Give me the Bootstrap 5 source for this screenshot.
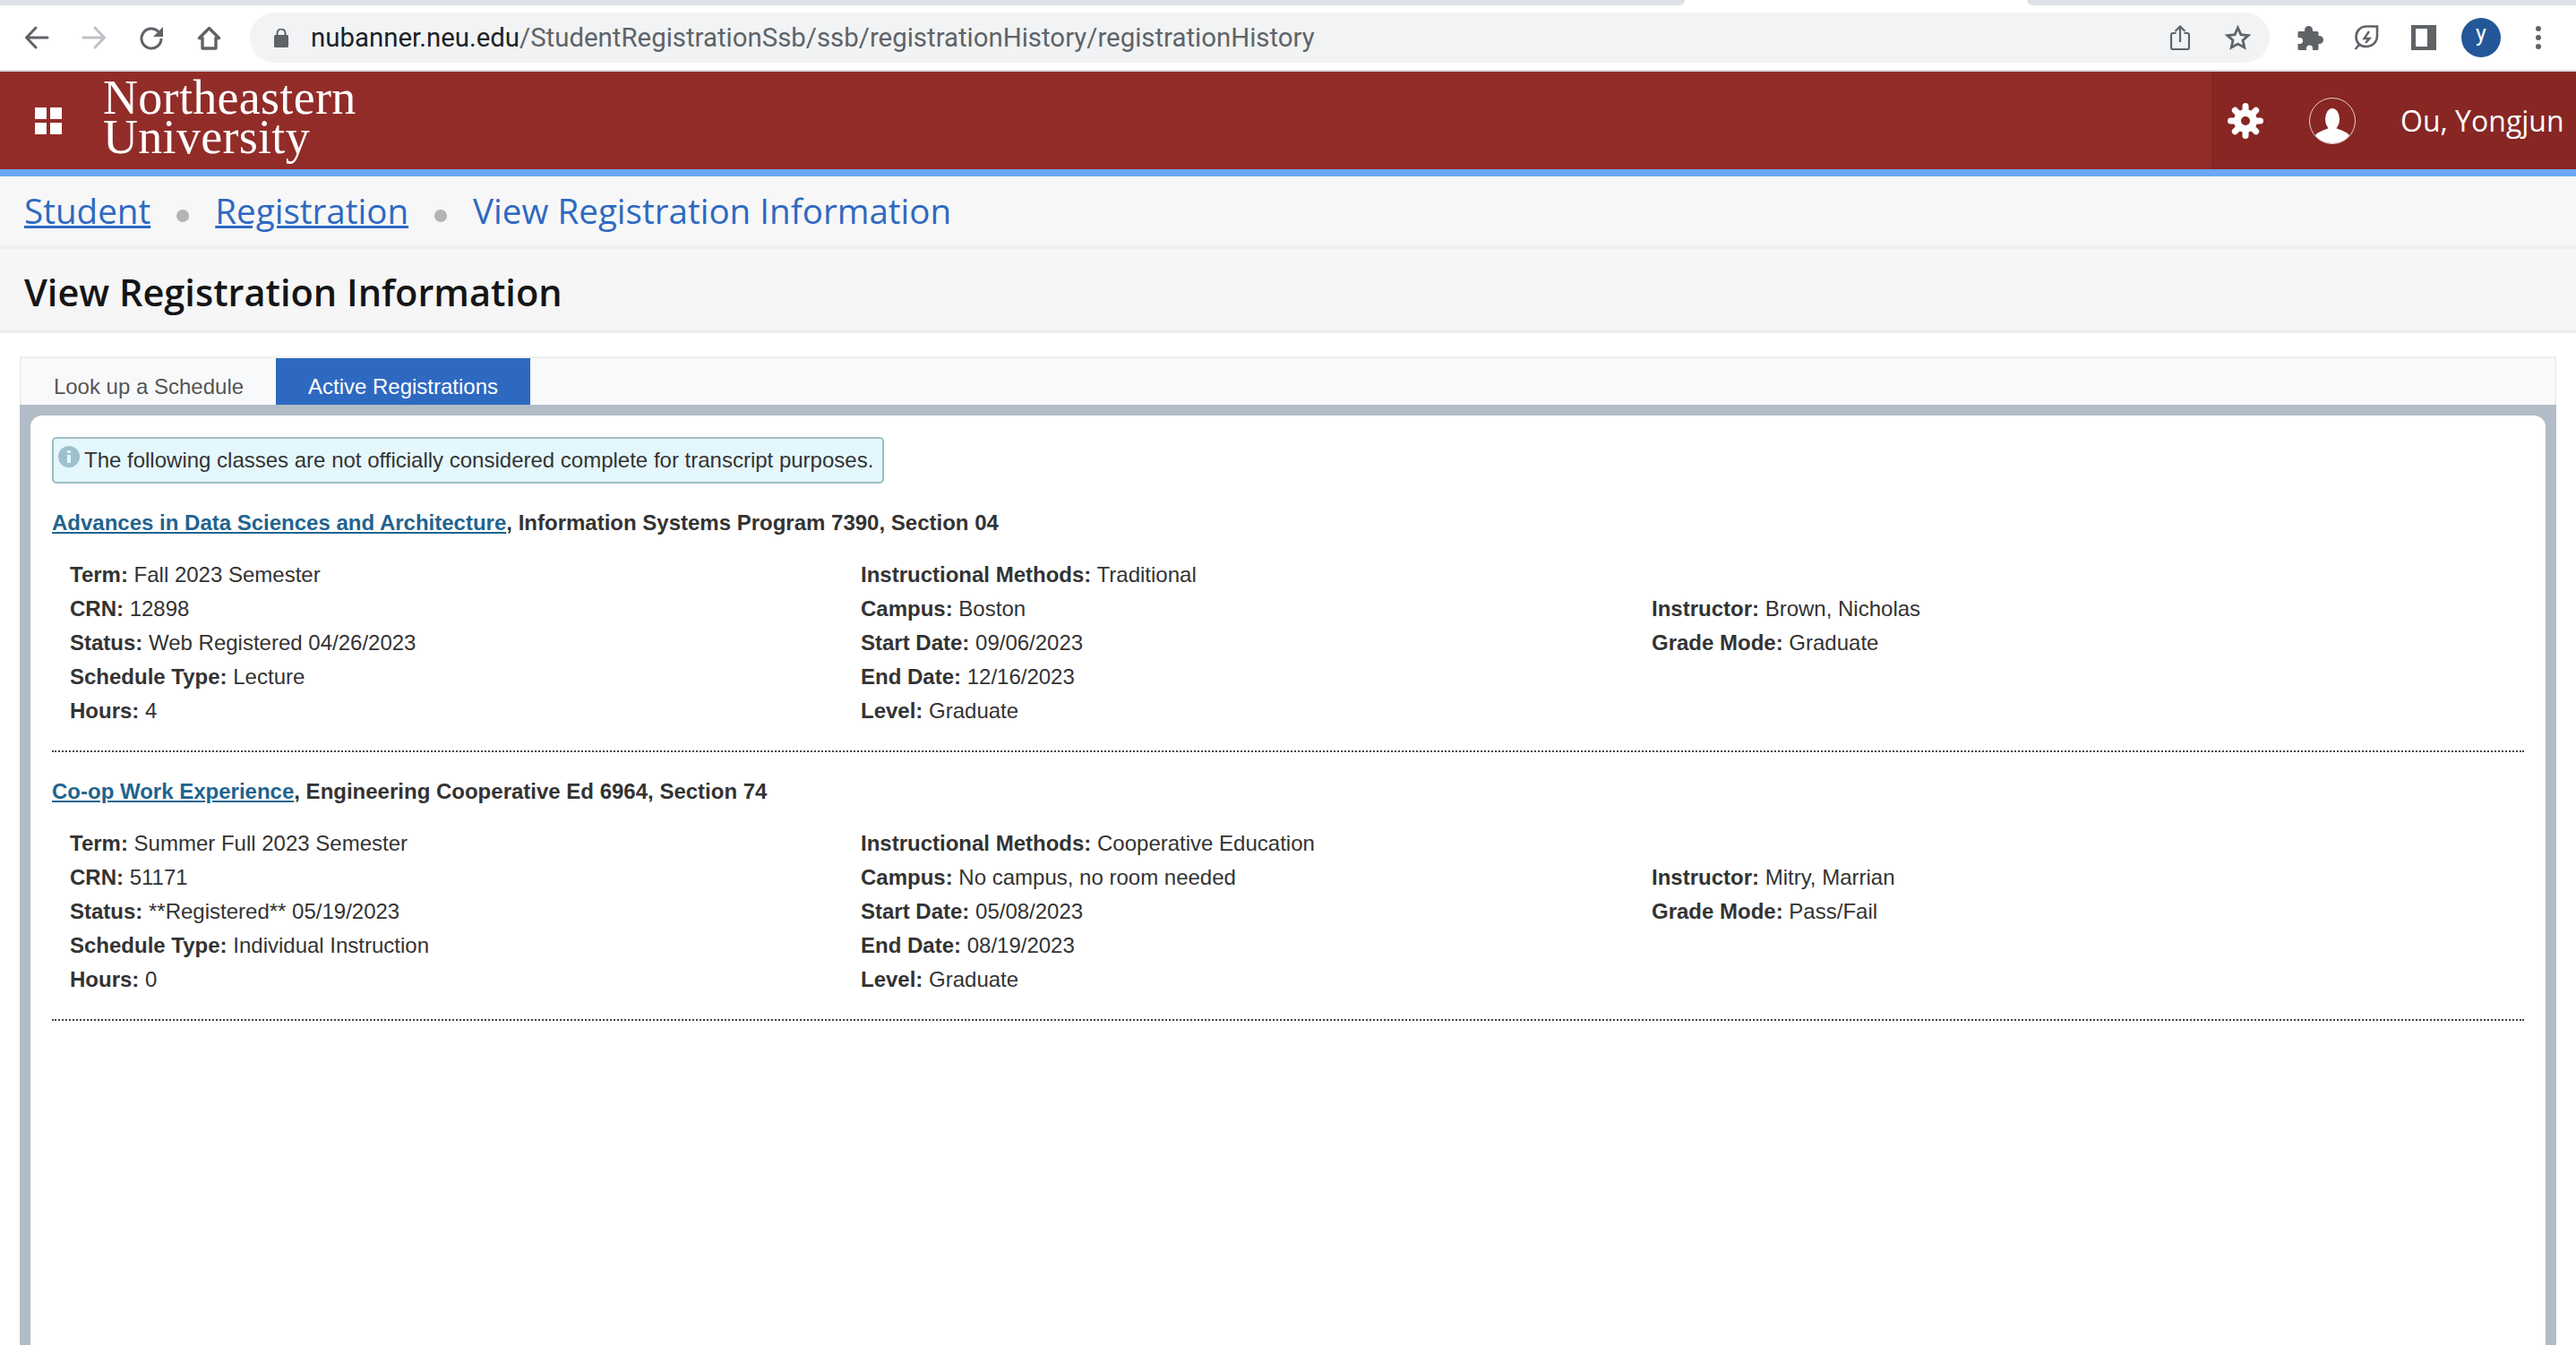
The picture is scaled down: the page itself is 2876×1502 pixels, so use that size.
<!DOCTYPE html>
<html lang="en">
<head>
    <meta charset="UTF-8">
    <meta name="viewport" content="width=device-width, initial-scale=1.0">
    <link href="https://cdn.jsdelivr.net/npm/bootstrap@5.3.2/dist/css/bootstrap.min.css" rel="stylesheet">
    <title>View Registration Information</title>
    <style>
        html, body { height: 100%; }
        body { background: #fff; overflow: hidden; font-family: "Liberation Sans", Arial, sans-serif; color: #333; }
        .tab-strip { height: 6px; background: #fff; display: flex; justify-content: space-between; }
        .tab-strip span { background: #dee1e6; }
        .tab-strip .left-part { width: 1881px; border-bottom-right-radius: 6px; }
        .tab-strip .right-part { width: 613px; border-bottom-left-radius: 6px; }
        .browser-bar { height: 74px; background: #fff; border-bottom: 2px solid #dcdcdc; padding: 0 0 0 9px; }
        .bar-btn { width: 64px; display: flex; justify-content: center; color: #5f6368; }
        .bar-btn.off { color: #bdc1c6; }
        .url-box { height: 56px; background: #f1f3f4; border-radius: 28px; margin-left: 14px; width: 2255px; padding: 0 21px 0 27px; font-family: "Roboto", sans-serif; font-size: 29.400px; color: #5f6368; }
        .url-box b { font-weight: 400; color: #202124; }
        .lock-icon { margin-right: 25px; }
        .tool-icon { color: #5f6368; flex: none; }
        .star-gap { margin-left: 39px; }
        .puzzle-gap { margin-left: 31px; }
        .leaf-gap { margin-left: 34px; }
        .panel-gap { margin-left: 36px; }
        .dots-gap { margin-left: 39px; }
        .avatar { width: 44px; height: 44px; margin-left: 28px; border-radius: 50%; background: #235797; color: #fff; font-size: 25px; line-height: 36px; text-align: center; font-family: "Roboto", sans-serif; }
        .top-red { height: 117px; background: #922c29; border-bottom: 8px solid #6aa8f7; }
        .grid-icon { margin-left: 39px; flex: none; }
        .logo-word { font-family: "Liberation Serif", serif; color: #fff; font-size: 54px; line-height: 44px; margin: -7px 0 0 46px; letter-spacing: .3px; }
        .user-part { background: #872623; width: 407px; padding-left: 18px; color: #fff; font-family: "Open Sans", sans-serif; font-size: 32px; }
        .user-photo { margin-left: 51px; }
        .user-name { margin-left: 50px; }
        .crumbs { height: 81px; background: #f7f7f7; border-bottom: 4px solid #eee; padding-left: 27px; font-family: "Open Sans", sans-serif; font-size: 38.600px; color: #2e69c1; }
        .crumbs a { color: #2e69c1; }
        .crumb-dot { width: 14px; height: 14px; border-radius: 50%; background: #b4b4b4; margin: 10px 29px 0 29px; }
        .page-title { height: 94px; background: #f6f6f6; border-bottom: 4px solid #eee; padding: 6px 0 0 27px; font-family: "Open Sans", sans-serif; font-weight: 600; font-size: 41.500px; color: #151515; }
        .tab-row { margin: 26px 22px 0; height: 54px; background: #f8f9fb; border-top: 2px solid #eee; border-left: 2px solid #eee; border-right: 2px solid #eee; display: flex; }
        .tab-item { width: 284px; padding-top: 11px; font-size: 24px; color: #555; display: flex; align-items: center; justify-content: center; }
        .tab-item.on { background: #2e69c1; color: #fff; }
        .tab-frame { margin: 0 22px; height: 1100px; background: #b1bcc6; padding: 12px 12px 0; }
        .tab-inner { background: #fff; height: 100%; border-radius: 13px 13px 0 0; padding: 24px 24px 0 24px; font-size: 24px; color: #333; }
        .note-box { display: inline-flex; align-items: center; height: 52px; background: #e4f7fc; border: 2px solid #9bbcc4; border-radius: 5px; padding: 0 10px 0 5px; color: #333; }
        .note-box svg { margin: -8px 5px 0 0; }
        .class-head { margin-top: 27px; line-height: 34px; font-weight: 700; }
        .class-head a { color: #1f648f; }
        .class-info { margin: 22px 0 0 20px; display: grid; grid-template-columns: 883px 883px 1fr; padding-bottom: 25px; line-height: 38px; }
        .class-info b { font-weight: 700; }
        .third-col { padding-top: 38px; }
        .dot-rule { border-top: 2px dotted #444; }
    </style>
</head>
<body>
    <div class="tab-strip"><span class="left-part"></span><span class="right-part"></span></div>
    <div class="browser-bar d-flex align-items-center">
        <div class="bar-btn"><svg width="28" height="28" viewBox="0 0 28 28" fill="none" stroke="currentColor" stroke-width="3" stroke-linecap="round" stroke-linejoin="round"><path d="M26 14H3M13 3 2.500 14 13 25"/></svg></div>
        <div class="bar-btn off"><svg width="28" height="28" viewBox="0 0 28 28" fill="none" stroke="currentColor" stroke-width="3" stroke-linecap="round" stroke-linejoin="round"><path d="M2 14h23M15 3l10.500 11L15 25"/></svg></div>
        <div class="bar-btn"><svg width="28" height="28" viewBox="0 0 28 28" fill="none" stroke="currentColor" stroke-width="3"><path d="M22 7.500A11 11 0 1 0 25 15"/><path d="M27 2v11H16z" fill="currentColor" stroke="none"/></svg></div>
        <div class="bar-btn"><svg width="27" height="27" viewBox="0 0 27 27" fill="none" stroke="currentColor" stroke-width="3.400" stroke-linejoin="round"><path d="M13.500 2.500 2.500 13.500h3.500v11.500h15V13.500h3.500z"/></svg></div>
        <div class="url-box d-flex align-items-center">
            <svg class="lock-icon" width="16" height="21" viewBox="0 0 16 21" fill="#5f6368"><rect y="7" width="16" height="14" rx="1.500"/><path d="M3.500 8V5a4.500 4.500 0 0 1 9 0v3" fill="none" stroke="#5f6368" stroke-width="2"/></svg>
            <span><b>nubanner.neu.edu</b>/StudentRegistrationSsb/ssb/registrationHistory/registrationHistory</span>
            <svg class="ms-auto tool-icon" width="22" height="28" viewBox="0 0 22 28" fill="none" stroke="currentColor" stroke-width="2.200"><path d="M6.500 9H3a2 2 0 0 0-2 2v14a2 2 0 0 0 2 2h16a2 2 0 0 0 2-2V11a2 2 0 0 0-2-2h-3.500M11 19V2M5.500 7 11 1.500 16.500 7"/></svg>
            <svg class="tool-icon star-gap" width="29" height="28" viewBox="0 0 29 28" fill="none" stroke="currentColor" stroke-width="2.800"><path d="m14.500 3 3.400 7.600 8.300.9-6.200 5.500 1.800 8.100-7.300-4.100-7.300 4.100 1.800-8.100-6.200-5.500 8.300-.9z"/></svg>
        </div>
        <svg class="tool-icon puzzle-gap" width="29" height="27" viewBox="0 0 29 27" fill="currentColor"><path d="M1 6h7V4.500a4.500 4.500 0 0 1 9 0V6h5a1.500 1.500 0 0 1 1.500 1.500V11h1a4.500 4.500 0 0 1 0 9h-1v5.500A1.500 1.500 0 0 1 22 27h-5v-2a3.500 3.500 0 0 0-7 0v2H2a1.500 1.500 0 0 1-1.500-1.500V20h2a3.500 3.500 0 0 0 0-7h-2V7z"/></svg>
        <svg class="tool-icon leaf-gap" width="28" height="30" viewBox="0 0 28 30" fill="none" stroke="currentColor" stroke-width="2.600"><path d="M26 2.500H14C7 2.500 2.500 8 2.500 14c0 3 1 6 3 8s5 3 8 3c7 0 12.500-5 12.500-12z"/><path d="M6 23l-4.500 5"/><path d="M17 8l-5.500 8h6L13 21" stroke-width="2.400"/></svg>
        <svg class="tool-icon panel-gap" width="28" height="28" viewBox="0 0 28 28" fill="currentColor"><path fill-rule="evenodd" d="M0 0h28v28H0zM5 4v20h13V4z"/></svg>
        <div class="avatar">y</div>
        <svg class="tool-icon dots-gap" width="6" height="26" viewBox="0 0 6 26" fill="currentColor"><circle cx="3" cy="3" r="3"/><circle cx="3" cy="13" r="3"/><circle cx="3" cy="23" r="3"/></svg>
    </div>
    <div class="top-red d-flex align-items-center">
        <svg class="grid-icon" width="30" height="30" viewBox="0 0 30 30" fill="#fff"><rect width="13" height="13"/><rect x="17" width="13" height="13"/><rect y="17" width="13" height="13"/><rect x="17" y="17" width="13" height="13"/></svg>
        <div class="logo-word">Northeastern<br>University</div>
        <div class="user-part ms-auto d-flex align-items-center align-self-stretch">
            <svg width="40" height="40" viewBox="0 0 40 40" fill="#fff"><g stroke="#fff" stroke-width="7" stroke-linecap="round"><path d="M20 3.500V10M20 30v6.500M3.500 20H10M30 20h6.500M8.300 8.300l4.500 4.500M27.200 27.200l4.500 4.500M31.700 8.300l-4.500 4.500M12.800 27.200l-4.500 4.500"/></g><path fill-rule="evenodd" d="M20 7a13 13 0 1 1 0 26 13 13 0 0 1 0-26zm0 8a5 5 0 1 0 0 10 5 5 0 0 0 0-10z"/></svg>
            <svg class="user-photo" width="52" height="52" viewBox="0 0 52 52"><circle cx="26" cy="26" r="25.500" fill="none" stroke="#e6cfcf" stroke-width="1"/><ellipse cx="26" cy="24" rx="8" ry="12" fill="#fff"/><path d="M7 42c3-4 11-6 15-8h8c4 2 12 4 15 8-4 6-12 9-19 9S11 48 7 42z" fill="#fff"/></svg>
            <span class="user-name">Ou, Yongjun</span>
        </div>
    </div>
    <div class="crumbs d-flex align-items-center">
        <a href="#">Student</a><span class="crumb-dot"></span><a href="#">Registration</a><span class="crumb-dot"></span><span>View Registration Information</span>
    </div>
    <div class="page-title d-flex align-items-center">View Registration Information</div>
    <div class="tab-row">
        <div class="tab-item">Look up a Schedule</div>
        <div class="tab-item on">Active Registrations</div>
    </div>
    <div class="tab-frame">
        <div class="tab-inner">
            <div class="note-box">
                <svg width="24" height="24" viewBox="0 0 24 24"><circle cx="12" cy="12" r="12" fill="#9cc1cd"/><rect x="10" y="10" width="4" height="9" fill="#e4f7fc"/><rect x="10" y="5" width="4" height="3" fill="#e4f7fc"/></svg>
                <span>The following classes are not officially considered complete for transcript purposes.</span>
            </div>
            <div class="class-head"><a href="#">Advances in Data Sciences and Architecture</a>, Information Systems Program 7390, Section 04</div>
            <div class="class-info">
                <div>
                    <div><b>Term:</b> Fall 2023 Semester</div>
                    <div><b>CRN:</b> 12898</div>
                    <div><b>Status:</b> Web Registered 04/26/2023</div>
                    <div><b>Schedule Type:</b> Lecture</div>
                    <div><b>Hours:</b> 4</div>
                </div>
                <div>
                    <div><b>Instructional Methods:</b> Traditional</div>
                    <div><b>Campus:</b> Boston</div>
                    <div><b>Start Date:</b> 09/06/2023</div>
                    <div><b>End Date:</b> 12/16/2023</div>
                    <div><b>Level:</b> Graduate</div>
                </div>
                <div class="third-col">
                    <div><b>Instructor:</b> Brown, Nicholas</div>
                    <div><b>Grade Mode:</b> Graduate</div>
                </div>
            </div>
            <div class="dot-rule"></div>
            <div class="class-head"><a href="#">Co-op Work Experience</a>, Engineering Cooperative Ed 6964, Section 74</div>
            <div class="class-info">
                <div>
                    <div><b>Term:</b> Summer Full 2023 Semester</div>
                    <div><b>CRN:</b> 51171</div>
                    <div><b>Status:</b> **Registered** 05/19/2023</div>
                    <div><b>Schedule Type:</b> Individual Instruction</div>
                    <div><b>Hours:</b> 0</div>
                </div>
                <div>
                    <div><b>Instructional Methods:</b> Cooperative Education</div>
                    <div><b>Campus:</b> No campus, no room needed</div>
                    <div><b>Start Date:</b> 05/08/2023</div>
                    <div><b>End Date:</b> 08/19/2023</div>
                    <div><b>Level:</b> Graduate</div>
                </div>
                <div class="third-col">
                    <div><b>Instructor:</b> Mitry, Marrian</div>
                    <div><b>Grade Mode:</b> Pass/Fail</div>
                </div>
            </div>
            <div class="dot-rule"></div>
        </div>
    </div>
    <script src="https://cdn.jsdelivr.net/npm/bootstrap@5.3.2/dist/js/bootstrap.bundle.min.js"></script>
</body>
</html>
